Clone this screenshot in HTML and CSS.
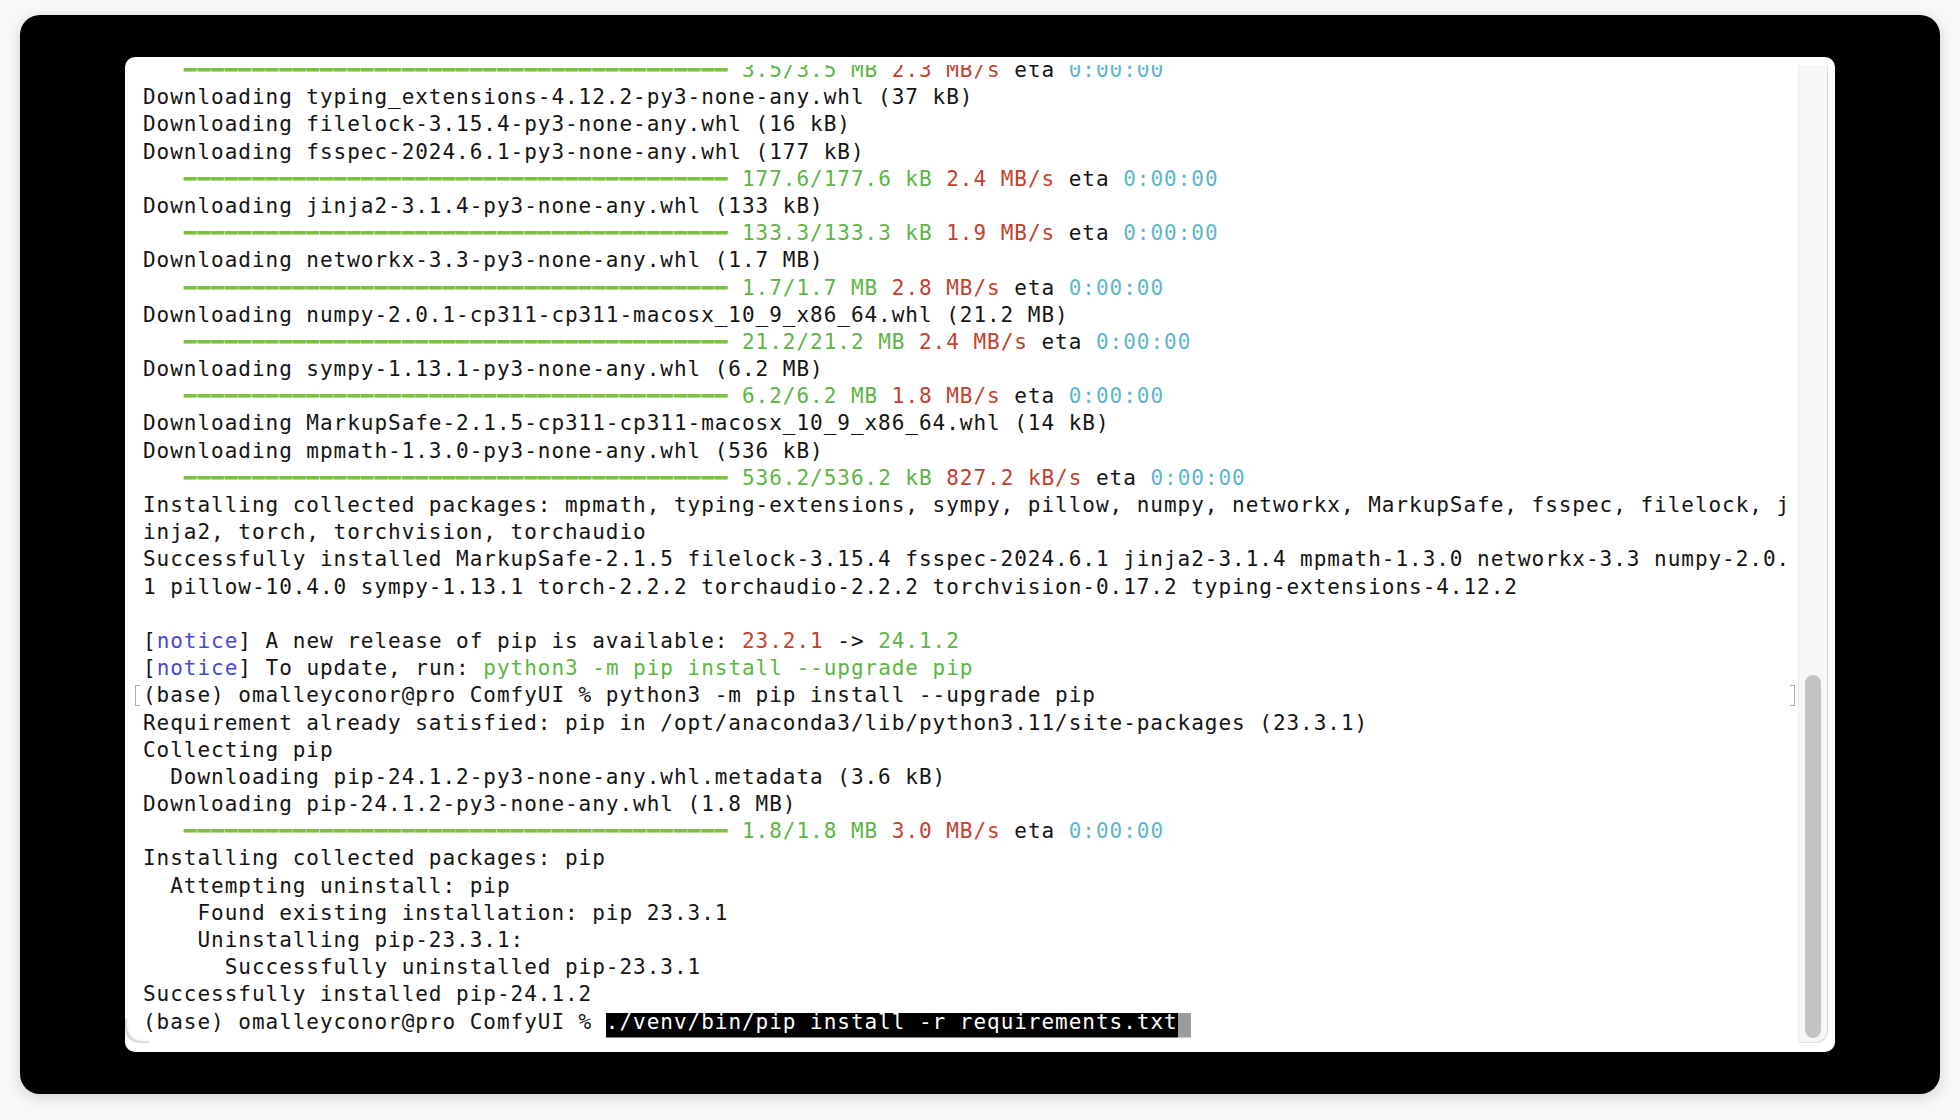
FILE: index.html
```html
<!DOCTYPE html>
<html lang="en">
<head>
<meta charset="utf-8">
<title>Terminal</title>
<link rel="stylesheet" href="styles.css">
</head>
<body>
<div class="frame">
  <div class="card">
    <div class="view">
      <div class="lines">
        <div class="ln">   <span class="bar">━━━━━━━━━━━━━━━━━━━━━━━━━━━━━━━━━━━━━━━━</span> <span class="g">3.5/3.5 MB</span> <span class="r">2.3 MB/s</span> eta <span class="c">0:00:00</span></div>
        <div class="ln">Downloading typing_extensions-4.12.2-py3-none-any.whl (37 kB)</div>
        <div class="ln">Downloading filelock-3.15.4-py3-none-any.whl (16 kB)</div>
        <div class="ln">Downloading fsspec-2024.6.1-py3-none-any.whl (177 kB)</div>
        <div class="ln">   <span class="bar">━━━━━━━━━━━━━━━━━━━━━━━━━━━━━━━━━━━━━━━━</span> <span class="g">177.6/177.6 kB</span> <span class="r">2.4 MB/s</span> eta <span class="c">0:00:00</span></div>
        <div class="ln">Downloading jinja2-3.1.4-py3-none-any.whl (133 kB)</div>
        <div class="ln">   <span class="bar">━━━━━━━━━━━━━━━━━━━━━━━━━━━━━━━━━━━━━━━━</span> <span class="g">133.3/133.3 kB</span> <span class="r">1.9 MB/s</span> eta <span class="c">0:00:00</span></div>
        <div class="ln">Downloading networkx-3.3-py3-none-any.whl (1.7 MB)</div>
        <div class="ln">   <span class="bar">━━━━━━━━━━━━━━━━━━━━━━━━━━━━━━━━━━━━━━━━</span> <span class="g">1.7/1.7 MB</span> <span class="r">2.8 MB/s</span> eta <span class="c">0:00:00</span></div>
        <div class="ln">Downloading numpy-2.0.1-cp311-cp311-macosx_10_9_x86_64.whl (21.2 MB)</div>
        <div class="ln">   <span class="bar">━━━━━━━━━━━━━━━━━━━━━━━━━━━━━━━━━━━━━━━━</span> <span class="g">21.2/21.2 MB</span> <span class="r">2.4 MB/s</span> eta <span class="c">0:00:00</span></div>
        <div class="ln">Downloading sympy-1.13.1-py3-none-any.whl (6.2 MB)</div>
        <div class="ln">   <span class="bar">━━━━━━━━━━━━━━━━━━━━━━━━━━━━━━━━━━━━━━━━</span> <span class="g">6.2/6.2 MB</span> <span class="r">1.8 MB/s</span> eta <span class="c">0:00:00</span></div>
        <div class="ln">Downloading MarkupSafe-2.1.5-cp311-cp311-macosx_10_9_x86_64.whl (14 kB)</div>
        <div class="ln">Downloading mpmath-1.3.0-py3-none-any.whl (536 kB)</div>
        <div class="ln">   <span class="bar">━━━━━━━━━━━━━━━━━━━━━━━━━━━━━━━━━━━━━━━━</span> <span class="g">536.2/536.2 kB</span> <span class="r">827.2 kB/s</span> eta <span class="c">0:00:00</span></div>
        <div class="ln">Installing collected packages: mpmath, typing-extensions, sympy, pillow, numpy, networkx, MarkupSafe, fsspec, filelock, j</div>
        <div class="ln">inja2, torch, torchvision, torchaudio</div>
        <div class="ln">Successfully installed MarkupSafe-2.1.5 filelock-3.15.4 fsspec-2024.6.1 jinja2-3.1.4 mpmath-1.3.0 networkx-3.3 numpy-2.0.</div>
        <div class="ln">1 pillow-10.4.0 sympy-1.13.1 torch-2.2.2 torchaudio-2.2.2 torchvision-0.17.2 typing-extensions-4.12.2</div>
        <div class="ln"> </div>
        <div class="ln">[<span class="b">notice</span>] A new release of pip is available: <span class="r">23.2.1</span> -&gt; <span class="g">24.1.2</span></div>
        <div class="ln">[<span class="b">notice</span>] To update, run: <span class="g">python3 -m pip install --upgrade pip</span></div>
        <div class="ln marked"><span class="mark mark-l"></span>(base) omalleyconor@pro ComfyUI % python3 -m pip install --upgrade pip<span class="mark mark-r"></span></div>
        <div class="ln">Requirement already satisfied: pip in /opt/anaconda3/lib/python3.11/site-packages (23.3.1)</div>
        <div class="ln">Collecting pip</div>
        <div class="ln">  Downloading pip-24.1.2-py3-none-any.whl.metadata (3.6 kB)</div>
        <div class="ln">Downloading pip-24.1.2-py3-none-any.whl (1.8 MB)</div>
        <div class="ln">   <span class="bar">━━━━━━━━━━━━━━━━━━━━━━━━━━━━━━━━━━━━━━━━</span> <span class="g">1.8/1.8 MB</span> <span class="r">3.0 MB/s</span> eta <span class="c">0:00:00</span></div>
        <div class="ln">Installing collected packages: pip</div>
        <div class="ln">  Attempting uninstall: pip</div>
        <div class="ln">    Found existing installation: pip 23.3.1</div>
        <div class="ln">    Uninstalling pip-23.3.1:</div>
        <div class="ln">      Successfully uninstalled pip-23.3.1</div>
        <div class="ln">Successfully installed pip-24.1.2</div>
        <div class="ln">(base) omalleyconor@pro ComfyUI % <span class="sel">./venv/bin/pip install -r requirements.txt</span><span class="cursor"> </span></div>
      </div>
    </div>
    <div class="scroll">
      <div class="thumb"></div>
    </div>
  </div>
</div>
</body>
</html>
```

FILE: styles.css
```css
html, body {
  margin: 0;
  padding: 0;
}

body {
  background: #f8f8f8;
  width: 1960px;
  height: 1120px;
  overflow: hidden;
}

.frame {
  margin: 15px 20px 0 20px;
  width: 1920px;
  height: 1079px;
  box-sizing: border-box;
  padding: 42px 105px;
  background: #000;
  border-radius: 20px;
  box-shadow: 0 3px 14px rgba(0, 0, 0, 0.16);
  display: flex;
}

.card {
  flex: 1;
  display: flex;
  background: #fff;
  border-radius: 10px;
  overflow: hidden;
}

.view {
  flex: 1;
  margin: 8px 0 9px 0;
  padding-left: 18px;
  overflow: hidden;
  position: relative;
  border-bottom-left-radius: 14px;
}

.view::after {
  content: "";
  position: absolute;
  left: 0;
  bottom: 0;
  width: 24px;
  height: 24px;
  border-bottom-left-radius: 14px;
  box-shadow: inset 3px -3px 2px -1px #d9d9d9;
  pointer-events: none;
}

.lines {
  margin-top: -8px;
  font-family: "DejaVu Sans Mono", "Liberation Mono", monospace;
  font-size: 21px;
  letter-spacing: 0.97px;
  color: #141414;
}

.ln {
  height: 27.2px;
  line-height: 27.2px;
  white-space: pre;
}

.bar {
  color: #7dbf40;
}

.g {
  color: #5db544;
}

.r {
  color: #c3402e;
}

.c {
  color: #5db7c9;
}

.b {
  color: #4a48d4;
}

.marked {
  position: relative;
}

.mark {
  position: absolute;
  top: 3px;
  width: 4px;
  height: 19px;
  border: 1.5px solid #a9a9a9;
}

.mark-l {
  left: -8px;
  border-right: none;
}

.mark-r {
  right: 3px;
  border-left: none;
}

.sel,
.cursor {
  padding-bottom: 4px;
  background-repeat: no-repeat;
  background-position: left bottom;
  background-size: 100% calc(100% - 3.5px);
}

.sel {
  color: #fff;
  background-image: linear-gradient(#000, #000);
}

.cursor {
  background-image: linear-gradient(#9c9c9c, #9c9c9c);
}

.scroll {
  width: 30px;
  box-sizing: border-box;
  margin: 8px 7px 9px 0;
  padding: 0 7px 5px 6px;
  background: #f7f7f7;
  border-left: 1px solid #ebebeb;
  border-bottom-right-radius: 12px;
  box-shadow: inset -1px -1px 0 #dedede;
  display: flex;
  flex-direction: column;
  justify-content: flex-end;
}

.thumb {
  height: 363px;
  background: #c3c3c3;
  border-radius: 8px;
}
```
